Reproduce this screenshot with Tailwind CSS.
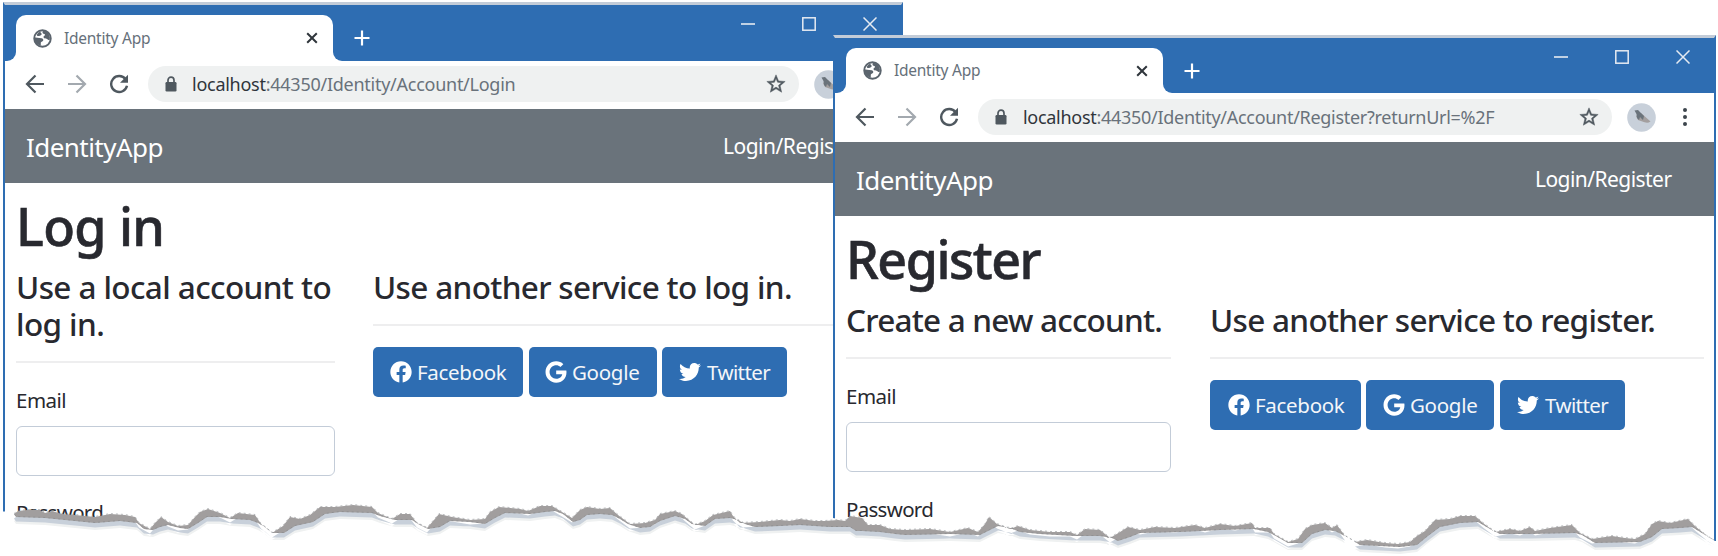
<!DOCTYPE html>
<html lang="en">
<head>
<meta charset="utf-8">
<title>Identity App</title>
<script src="https://cdn.jsdelivr.net/npm/@tailwindcss/browser@4"></script>
</head>
<body class="bg-white font-['Noto_Sans',sans-serif] text-[#28292f]">
<svg width="0" height="0" class="absolute">
  <symbol id="globe" viewBox="0 0 20 20"><circle cx="10" cy="10" r="8.700" fill="#fff" stroke="#5b646d" stroke-width="2"/><path d="M10.500 1.500c2 .3 5 1.200 6.500 4.500 1 2 1 4 .5 5.500-1.500.3-2-.8-3.200-1.300-1-.4-2.300 0-3-1-.6-1 0-1.900 1-2.400.8-.4.300-1.300-.500-1.500-1.300-.3-1.800-.8-1.800-1.800 0-.8.500-1.200.5-2ZM1.500 9c2-.3 3.200.4 5 .5 1.200.1 2.700 0 3.700.8 1 .8.800 2-.1 2.700-.8.600-1.900.7-1.900 1.800 0 1 .2 1.800-.2 2.700C4 16.500 1.500 13.500 1.500 9ZM5 4.500c1-1 1.800-1.500 3-2-.2 1.200.3 1.700 1 2.300.5.500.200 1.100-.400 1.500C7.500 7 6.500 7.600 5 7.400 4 7.200 3.500 6.500 5 4.500Z" fill="#5b646d"/></symbol>
  <symbol id="close" viewBox="0 0 12 12"><path d="M1.200 1.200 10.800 10.800M10.800 1.200 1.200 10.800" stroke="#2f353b" stroke-width="2" fill="none"/></symbol>
  <symbol id="plus" viewBox="0 0 16 16"><path d="M8 .5v15M.5 8h15" stroke="#fff" stroke-width="2.200" fill="none"/></symbol>
  <symbol id="back" viewBox="0 0 20 20"><path d="M19 10H2.500M10.500 1.500 2 10l8.500 8.500" stroke="currentColor" stroke-width="2.200" fill="none"/></symbol>
  <symbol id="reload" viewBox="0 0 20 20"><path d="M16.600 5.200A8 8 0 1 0 18 11.800" stroke="#4f585f" stroke-width="2.400" fill="none"/><path d="M19 .8v8h-8Z" fill="#4f585f"/></symbol>
  <symbol id="lock" viewBox="0 0 12 16"><path d="M3 7V4.200a3 3 0 0 1 6 0V7" stroke="#4f585f" stroke-width="1.700" fill="none"/><rect x=".5" y="6" width="11" height="9.500" rx="1.200" fill="#4f585f"/></symbol>
  <symbol id="star" viewBox="0 0 24 24"><path d="m22 9.240-7.190-.62L12 2 9.190 8.630 2 9.240l5.460 4.730L5.820 21 12 17.270 18.180 21l-1.630-7.030L22 9.240ZM12 15.400l-3.760 2.270 1-4.280-3.320-2.880 4.380-.38L12 6.100l1.710 4.040 4.380.38-3.320 2.880 1 4.280L12 15.400Z" fill="#4f585f" stroke="#4f585f" stroke-width=".5"/></symbol>
  <symbol id="avatar" viewBox="0 0 29 29"><circle cx="14.500" cy="14.500" r="14.300" fill="#c8d0da"/><path d="M9 13 14 10l9.500 8.500c-2 1.500-4 1.200-6 .8L11 17Z" fill="#a39f9f"/><path d="M7.500 7.500 11 7l6 6-1 4-3-3-1 3-2-2-.500-4Z" fill="#6a737b"/></symbol>
  <symbol id="minimize" viewBox="0 0 14 14"><path d="M0 7h14" stroke="#e6ebf2" stroke-width="1.600"/></symbol>
  <symbol id="maximize" viewBox="0 0 14 14"><rect x=".8" y=".8" width="12.400" height="12.400" stroke="#e6ebf2" stroke-width="1.500" fill="none"/></symbol>
  <symbol id="exit" viewBox="0 0 14 14"><path d="m.5.5 13 13M13.500.5l-13 13" stroke="#e6ebf2" stroke-width="1.500"/></symbol>
  <symbol id="facebook" viewBox="0 0 512 512"><path fill="#fff" d="M504 256C504 119 393 8 256 8S8 119 8 256c0 123.780 90.690 226.380 209.250 245V327.690h-63V256h63v-54.640c0-62.150 37-96.480 93.670-96.480 27.140 0 55.520 4.840 55.520 4.840v61h-31.280c-30.800 0-40.410 19.120-40.410 38.730V256h68.780l-11 71.690h-57.780V501C413.310 482.380 504 379.780 504 256z"/></symbol>
  <symbol id="google" viewBox="0 0 488 512"><path fill="#fff" d="M488 261.800C488 403.300 391.100 504 248 504 110.800 504 0 393.200 0 256S110.800 8 248 8c66.800 0 123 24.500 166.300 64.900l-67.500 64.900C258.500 52.600 94.300 116.600 94.300 256c0 86.500 69.100 156.600 153.700 156.600 98.200 0 135-70.400 140.800-106.900H248v-85.300h236.100c2.300 12.700 3.900 24.900 3.900 41.400z"/></symbol>
  <symbol id="twitter" viewBox="0 0 512 512"><path fill="#fff" d="M459.370 151.716c.325 4.548.325 9.097.325 13.645 0 138.720-105.583 298.558-298.558 298.558-59.452 0-114.680-17.219-161.137-47.106 8.447.974 16.568 1.299 25.340 1.299 49.055 0 94.213-16.568 130.274-44.832-46.132-.975-84.792-31.188-98.112-72.772 6.498.974 12.995 1.624 19.818 1.624 9.421 0 18.843-1.300 27.614-3.573-48.081-9.747-84.143-51.980-84.143-102.985v-1.299c13.969 7.797 30.214 12.670 47.431 13.319-28.264-18.843-46.781-51.005-46.781-87.391 0-19.492 5.197-37.360 14.294-52.954 51.655 63.675 129.300 105.258 216.365 109.807-1.624-7.797-2.599-15.918-2.599-24.040 0-57.828 46.782-104.934 104.934-104.934 30.213 0 57.502 12.670 76.670 33.137 23.715-4.548 46.456-13.320 66.599-25.340-7.798 24.366-24.366 44.833-46.132 57.827 21.117-2.273 41.584-8.122 60.426-16.243-14.292 20.791-32.161 39.308-52.628 54.253z"/></symbol>
</svg>

<main class="relative h-[556px] w-[1718px] overflow-hidden">

  <!-- Login window -->
  <section class="absolute left-[3px] top-[2px] h-[540px] w-[900px] border-x-2 border-t-3 border-x-[#2e6db2] border-t-[#c3ccd8] bg-white">
    <header class="flex h-14 bg-[#2e6db2]">
      <div class="flex w-[11px] items-end bg-white"><div class="h-full w-full rounded-br-[9px] bg-[#2e6db2]"></div></div>
      <div class="bg-[#2e6db2] pt-2.5">
        <div class="flex h-[46px] w-[317px] items-center rounded-t-[10px] bg-white pl-[17px] pr-[15px]">
          <svg class="size-[19px]"><use href="#globe"/></svg>
          <span class="ml-[12px] grow pt-px text-[15.5px] tracking-[-0.25px] text-[#66707a]">Identity App</span>
          <svg class="size-3"><use href="#close"/></svg>
        </div>
      </div>
      <div class="grow bg-white">
        <div class="flex h-full items-start rounded-bl-[9px] bg-[#2e6db2] pl-[21px] pr-[24px]">
          <svg class="mt-[25px] size-4"><use href="#plus"/></svg>
          <div class="ml-auto mt-3 flex gap-[47px]">
            <svg class="size-3.5"><use href="#minimize"/></svg>
            <svg class="size-3.5"><use href="#maximize"/></svg>
            <svg class="size-3.5"><use href="#exit"/></svg>
          </div>
        </div>
      </div>
    </header>
    <div class="flex h-12 items-start pt-[5px] text-[#4f585f]">
      <div class="flex h-9 items-center gap-[22px] pl-[20px]">
        <svg class="size-5"><use href="#back"/></svg>
        <svg class="size-5 -scale-x-100 text-[#a3a9af]"><use href="#back"/></svg>
        <svg class="size-5"><use href="#reload"/></svg>
      </div>
      <div class="ml-[19px] flex h-9 w-[651px] items-center rounded-full bg-[#eff1f1] pl-[17px] pr-[12px]">
        <svg class="h-4 w-3"><use href="#lock"/></svg>
        <span class="ml-[15px] grow text-[18px] tracking-[-0.26px] text-[#69727b]"><span class="text-[#2f353b]">localhost</span>:44350/Identity/Account/Login</span>
        <svg class="size-[22px]"><use href="#star"/></svg>
      </div>
      <svg class="ml-[15px] mt-1 size-[29px]"><use href="#avatar"/></svg>
    </div>
    <nav class="flex h-[74px] items-center bg-[#6a737b] pl-[21px] pt-0.5 text-white">
      <span class="w-[697px] text-[26px] tracking-[-0.55px]">IdentityApp</span>
      <span class="text-[21px] tracking-[-0.5px]">Login/Register</span>
    </nav>
    <div class="px-[11px] pt-[13px]">
      <h1 class="text-[52px]/[60px] font-medium tracking-[-0.6px] [-webkit-text-stroke:0.6px]">Log in</h1>
      <div class="mt-3 flex">
        <div class="w-[319px] shrink-0">
          <h4 class="whitespace-nowrap text-[31.5px]/[37px] font-medium tracking-[-0.6px]">Use a local account to<br>log in.</h4>
          <hr class="mt-[19px] border-t-2 border-[#eeeeef]">
          <div class="mt-[22px] text-[20.5px]/[31px] tracking-[-0.5px]">Email</div>
          <div class="mt-2.5 h-[50px] rounded-[6px] border border-[#c3ccd8]"></div>
          <div class="mt-[21px] text-[20.5px]/[31px] tracking-[-0.7px]">Password</div>
        </div>
        <div class="ml-[38px] w-[529px] shrink-0">
          <h4 class="whitespace-nowrap text-[31.5px]/[37px] font-medium tracking-[-0.66px]">Use another service to log in.</h4>
          <hr class="mt-[19px] border-t-2 border-[#eeeeef]">
          <div class="mt-[21px] flex gap-[6px] text-[20.5px] text-[#f4f6f9]">
            <div class="flex h-[50px] w-[150px] items-center gap-[5px] rounded-[5px] bg-[#2e6db2] pl-[17px]"><svg class="size-[22px]"><use href="#facebook"/></svg><span class="tracking-[-0.3px]">Facebook</span></div>
            <div class="flex h-[50px] w-[128px] items-center gap-[5px] rounded-[5px] bg-[#2e6db2] pl-[16px]"><svg class="size-[22px]"><use href="#google"/></svg><span class="tracking-[-0.3px]">Google</span></div>
            <div class="-ml-px flex h-[50px] w-[125px] items-center gap-[6px] rounded-[5px] bg-[#2e6db2] pl-[17px]"><svg class="size-[22px]"><use href="#twitter"/></svg><span class="tracking-[-0.6px]">Twitter</span></div>
          </div>
        </div>
      </div>
    </div>
  </section>

  <!-- Register window -->
  <section class="absolute left-[833px] top-[35px] h-[507px] w-[883px] border-x-2 border-t-3 border-x-[#2e6db2] border-t-[#c3ccd8] bg-white">
    <header class="flex h-[55px] bg-[#2e6db2]">
      <div class="flex w-[11px] items-end bg-white"><div class="h-full w-full rounded-br-[9px] bg-[#2e6db2]"></div></div>
      <div class="bg-[#2e6db2] pt-2.5">
        <div class="flex h-[45px] w-[317px] items-center rounded-t-[10px] bg-white pl-[17px] pr-[15px]">
          <svg class="size-[19px]"><use href="#globe"/></svg>
          <span class="ml-[12px] grow pt-px text-[15.5px] tracking-[-0.25px] text-[#66707a]">Identity App</span>
          <svg class="size-3"><use href="#close"/></svg>
        </div>
      </div>
      <div class="grow bg-white">
        <div class="flex h-full items-start rounded-bl-[9px] bg-[#2e6db2] pl-[21px] pr-[24px]">
          <svg class="mt-[25px] size-4"><use href="#plus"/></svg>
          <div class="ml-auto mt-[12px] flex gap-[47px]">
            <svg class="size-3.5"><use href="#minimize"/></svg>
            <svg class="size-3.5"><use href="#maximize"/></svg>
            <svg class="size-3.5"><use href="#exit"/></svg>
          </div>
        </div>
      </div>
    </header>
    <div class="flex h-[49px] items-start pt-[6px] text-[#4f585f]">
      <div class="flex h-9 items-center gap-[22px] pl-[20px]">
        <svg class="size-5"><use href="#back"/></svg>
        <svg class="size-5 -scale-x-100 text-[#a3a9af]"><use href="#back"/></svg>
        <svg class="size-5"><use href="#reload"/></svg>
      </div>
      <div class="ml-[19px] flex h-9 w-[634px] items-center rounded-full bg-[#eff1f1] pl-[17px] pr-[12px]">
        <svg class="h-4 w-3"><use href="#lock"/></svg>
        <span class="ml-[16px] grow text-[18px] tracking-[-0.29px] text-[#69727b]"><span class="text-[#2f353b]">localhost</span>:44350/Identity/Account/Register?returnUrl=%2F</span>
        <svg class="size-[22px]"><use href="#star"/></svg>
      </div>
      <svg class="ml-[15px] mt-1 size-[29px]"><use href="#avatar"/></svg>
      <div class="ml-[27px] mt-[9px] flex flex-col gap-[3px]">
        <i class="size-1 rounded-full bg-[#3d454c]"></i><i class="size-1 rounded-full bg-[#3d454c]"></i><i class="size-1 rounded-full bg-[#3d454c]"></i>
      </div>
    </div>
    <nav class="flex h-[74px] items-center bg-[#6a737b] pl-[21px] pt-0.5 text-white">
      <span class="w-[679px] text-[26px] tracking-[-0.55px]">IdentityApp</span>
      <span class="text-[21px] tracking-[-0.55px]">Login/Register</span>
    </nav>
    <div class="px-[11px] pt-[13px]">
      <h1 class="text-[52px]/[60px] font-medium tracking-[-1.5px] [-webkit-text-stroke:0.6px]">Register</h1>
      <div class="mt-3 flex">
        <div class="w-[325px] shrink-0">
          <h4 class="whitespace-nowrap text-[31.5px]/[37px] font-medium tracking-[-0.78px]">Create a new account.</h4>
          <hr class="mt-[19px] border-t-2 border-[#eeeeef]">
          <div class="mt-[22px] text-[20.5px]/[31px] tracking-[-0.5px]">Email</div>
          <div class="mt-[10px] h-[50px] rounded-[6px] border border-[#c3ccd8]"></div>
          <div class="mt-[22px] text-[20.5px]/[31px] tracking-[-0.7px]">Password</div>
        </div>
        <div class="ml-[39px] w-[494px] shrink-0">
          <h4 class="whitespace-nowrap text-[31.5px]/[37px] font-medium tracking-[-0.7px]">Use another service to register.</h4>
          <hr class="mt-[19px] border-t-2 border-[#eeeeef]">
          <div class="mt-[21px] flex gap-[6px] text-[20.5px] text-[#f4f6f9]">
            <div class="flex h-[50px] w-[151px] items-center gap-[5px] rounded-[5px] bg-[#2e6db2] pl-[18px]"><svg class="size-[22px]"><use href="#facebook"/></svg><span class="tracking-[-0.3px]">Facebook</span></div>
            <div class="-ml-px flex h-[50px] w-[128px] items-center gap-[5px] rounded-[5px] bg-[#2e6db2] pl-[17px]"><svg class="size-[22px]"><use href="#google"/></svg><span class="tracking-[-0.3px]">Google</span></div>
            <div class="flex h-[50px] w-[125px] items-center gap-[6px] rounded-[5px] bg-[#2e6db2] pl-[17px]"><svg class="size-[22px]"><use href="#twitter"/></svg><span class="tracking-[-0.6px]">Twitter</span></div>
          </div>
        </div>
      </div>
    </div>
  </section>

  <!-- Torn paper edge -->
  <svg class="absolute left-0 top-0" width="1718" height="556" viewBox="0 0 1718 556">
    <defs>
      <path id="tear" d="M14 514 18 511 27 510 40 510 45 513 52 511 62 514 75 515 95 517 110 514 125 515 135 517 139 523 150 529 155 523 161 517 168 522 178 526 188 525 195 517 200 512 208 509 220 513 230 518 238 513 255 515 261 524 272 533 283 526 290 517 300 519 310 515 320 507 335 507 353 505 372 507 378 513 392 519 400 514 410 514 417 523 427 528 434 520 439 514 452 517 470 520 485 519 490 512 499 507 520 509 528 511 540 506 552 506 562 512 572 518 580 510 587 507 600 509 610 508 618 515 630 524 645 523 655 520 660 514 675 511 682 514 690 521 695 525 705 521 713 515 730 511 733 516 740 523 760 522 780 520 790 521 800 519 815 521 825 521 838 520 845 521 850 516 862 518 868 525 880 525 890 529 905 530 930 529 950 532 968 528 978 532 985 524 989 517 997 524 1010 529 1018 526 1030 530 1050 532 1070 532 1077 535 1085 529 1100 530 1110 538 1120 532 1128 527 1140 530 1155 527 1175 528 1195 525 1205 528 1220 524 1235 526 1252 523 1255 528 1270 528 1274 534 1288 542 1298 539 1305 529 1312 525 1325 523 1332 528 1337 525 1345 536 1355 542 1367 540 1385 543 1398 544 1410 542 1417 536 1425 531 1435 520 1450 519 1460 516 1475 516 1483 523 1495 532 1510 529 1520 531 1530 527 1535 531 1550 528 1572 525 1580 533 1592 539 1612 536 1625 538 1635 539 1645 534 1652 524 1658 521 1670 523 1688 519 1695 526 1708 537 1715 541
      1692 527 1680 528 1662 529 1652 537 1640 542 1595 543 1582 535 1575 533 1530 534 1500 534 1490 529 1478 522 1460 523 1440 527 1428 536 1417 545 1400 547 1360 545 1345 536 1335 531 1325 530 1312 534 1302 543 1288 543 1274 535 1268 532 1254 529 1220 530 1180 532 1140 533 1130 537 1118 541 1112 538 1100 536 1075 536 1040 534 1020 532 1010 528 998 526 990 530 980 535 950 534 905 535 895 534 880 532 862 531 856 531 850 527 830 527 800 525 780 526 755 527 745 524 738 520 730 518 715 519 705 526 692 524 685 519 675 516 660 521 650 527 640 528 628 524 620 519 612 515 600 514 587 515 580 520 573 522 568 518 563 514 555 511 545 512 530 514 505 513 495 518 485 524 470 522 450 521 440 527 428 529 418 524 412 520 395 520 380 516 372 513 340 512 325 514 313 522 295 526 284 533 272 533 265 527 258 523 250 520 232 519 220 517 207 517 198 523 188 529 180 528 168 525 160 527 153 530 144 529 137 523 120 521 95 523 75 521 45 518 16 517Z"/>
    </defs>
    <path fill="#fff" d="M0 511.500H14L45 515 95 520 135 521 150 530 168 524 188 528 208 513 230 519 255 518 272 534 290 524 320 510 372 510 392 520 412 518 428 530 439 520 485 522 500 510 562 512 572 520 587 510 612 512 630 525 655 523 675 513 695 526 713 517 733 517 750 525 825 524 833 518 850 521 862 528 890 532 978 533 989 522 1010 529 1110 538 1130 532 1254 527 1288 544 1312 529 1335 529 1360 544 1417 540 1440 522 1475 519 1500 533 1572 528 1592 540 1640 540 1660 525 1690 524 1715 541H1718V556H0Z"/>
    <use href="#tear" y="7" fill="#eff1f1"/>
    <use href="#tear" y="4.500" fill="#c8d0da"/>
    <use href="#tear" fill="#a19e9e"/>
    <use href="#tear" y="-.5" fill="none" stroke="#808487" stroke-width="1" stroke-dasharray="2 3" opacity=".5"/>
  </svg>
</main>
</body>
</html>
